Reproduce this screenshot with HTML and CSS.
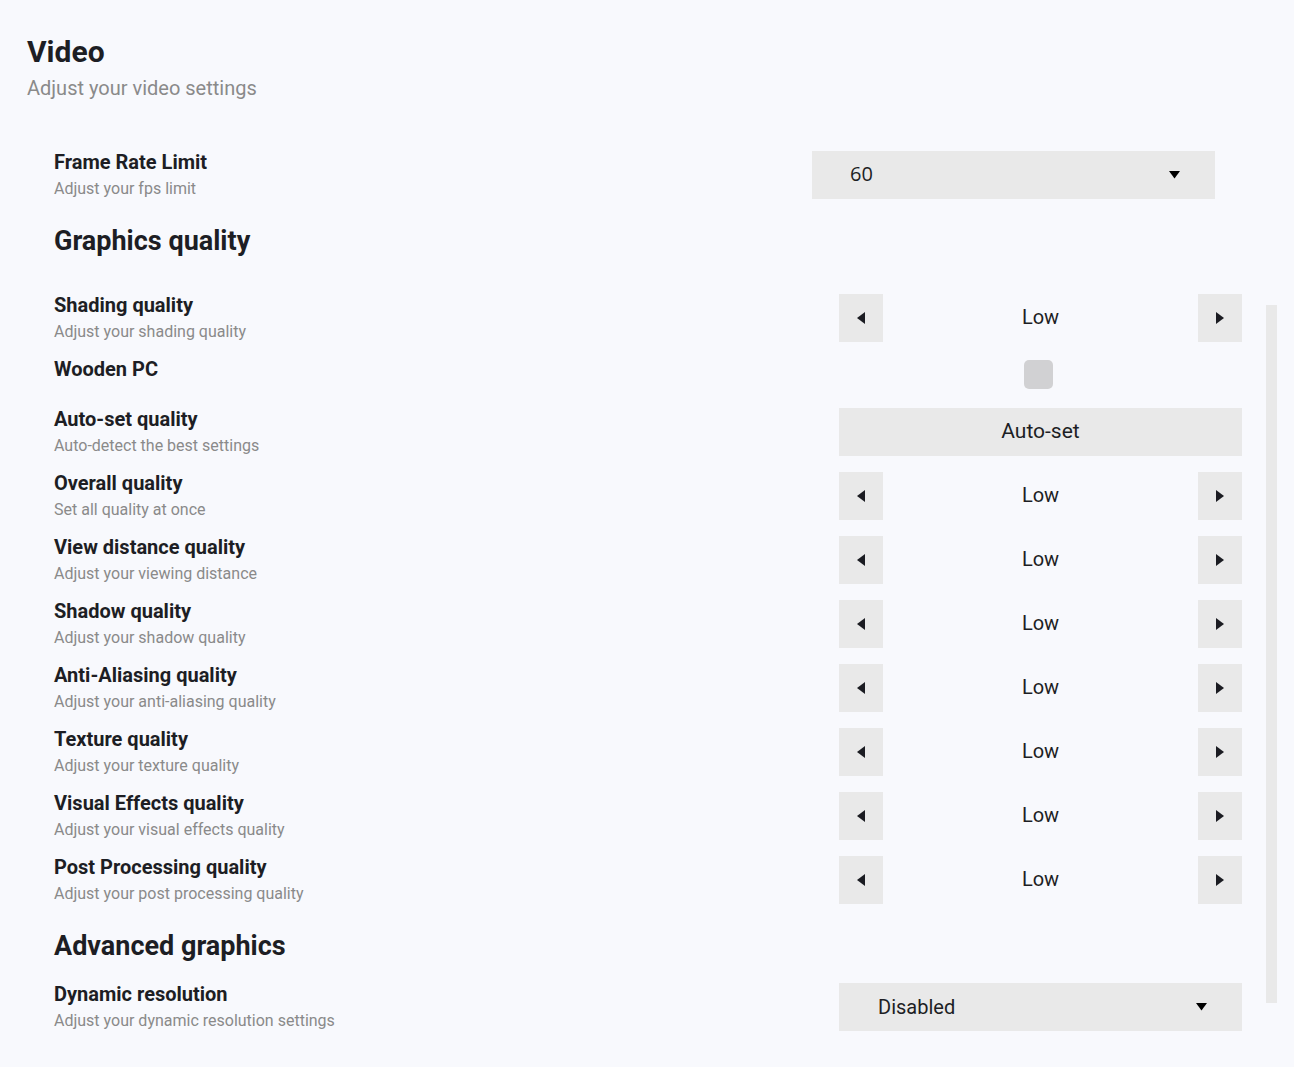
FILE: index.html
```html
<!DOCTYPE html>
<html lang="en">
<head>
    <meta charset="UTF-8">
    <meta name="viewport" content="width=device-width, initial-scale=1.0">
    <title>Video Settings</title>
    <link rel="stylesheet" href="styles.css">
</head>
<body>

    <div class="page">
        <h1 class="page-title">Video</h1>
        <p class="page-subtitle">Adjust your video settings</p>

        <div class="settings">
            <div class="row">
                <div class="label">
                    <div class="label-title">Frame Rate Limit</div>
                    <div class="label-sub">Adjust your fps limit</div>
                </div>
                <div class="select select-fps">
                    <span class="select-value select-value-alt">60</span>
                    <svg class="caret" width="11" height="8" viewBox="0 0 11 8"><polygon points="0,0 11,0 5.5,7.5" fill="#000"/></svg>
                </div>
            </div>

            <h2 class="section-title section-first">Graphics quality</h2>

            <div class="row">
                <div class="label">
                    <div class="label-title">Shading quality</div>
                    <div class="label-sub">Adjust your shading quality</div>
                </div>
                <div class="stepper">
                    <button class="step-btn"><svg width="8" height="12" viewBox="0 0 8 12"><polygon points="8,0 8,12 0,6" fill="#1b1c22"/></svg></button>
                    <span class="step-value">Low</span>
                    <button class="step-btn"><svg width="8" height="12" viewBox="0 0 8 12"><polygon points="0,0 0,12 8,6" fill="#1b1c22"/></svg></button>
                </div>
            </div>

            <div class="row">
                <div class="label">
                    <div class="label-title">Wooden PC</div>
                </div>
                <div class="check-wrap">
                    <span class="checkbox"></span>
                </div>
            </div>

            <div class="row">
                <div class="label">
                    <div class="label-title">Auto-set quality</div>
                    <div class="label-sub">Auto-detect the best settings</div>
                </div>
                <button class="action-btn">Auto-set</button>
            </div>

            <div class="row">
                <div class="label">
                    <div class="label-title">Overall quality</div>
                    <div class="label-sub">Set all quality at once</div>
                </div>
                <div class="stepper">
                    <button class="step-btn"><svg width="8" height="12" viewBox="0 0 8 12"><polygon points="8,0 8,12 0,6" fill="#1b1c22"/></svg></button>
                    <span class="step-value">Low</span>
                    <button class="step-btn"><svg width="8" height="12" viewBox="0 0 8 12"><polygon points="0,0 0,12 8,6" fill="#1b1c22"/></svg></button>
                </div>
            </div>

            <div class="row">
                <div class="label">
                    <div class="label-title">View distance quality</div>
                    <div class="label-sub">Adjust your viewing distance</div>
                </div>
                <div class="stepper">
                    <button class="step-btn"><svg width="8" height="12" viewBox="0 0 8 12"><polygon points="8,0 8,12 0,6" fill="#1b1c22"/></svg></button>
                    <span class="step-value">Low</span>
                    <button class="step-btn"><svg width="8" height="12" viewBox="0 0 8 12"><polygon points="0,0 0,12 8,6" fill="#1b1c22"/></svg></button>
                </div>
            </div>

            <div class="row">
                <div class="label">
                    <div class="label-title">Shadow quality</div>
                    <div class="label-sub">Adjust your shadow quality</div>
                </div>
                <div class="stepper">
                    <button class="step-btn"><svg width="8" height="12" viewBox="0 0 8 12"><polygon points="8,0 8,12 0,6" fill="#1b1c22"/></svg></button>
                    <span class="step-value">Low</span>
                    <button class="step-btn"><svg width="8" height="12" viewBox="0 0 8 12"><polygon points="0,0 0,12 8,6" fill="#1b1c22"/></svg></button>
                </div>
            </div>

            <div class="row">
                <div class="label">
                    <div class="label-title">Anti-Aliasing quality</div>
                    <div class="label-sub">Adjust your anti-aliasing quality</div>
                </div>
                <div class="stepper">
                    <button class="step-btn"><svg width="8" height="12" viewBox="0 0 8 12"><polygon points="8,0 8,12 0,6" fill="#1b1c22"/></svg></button>
                    <span class="step-value">Low</span>
                    <button class="step-btn"><svg width="8" height="12" viewBox="0 0 8 12"><polygon points="0,0 0,12 8,6" fill="#1b1c22"/></svg></button>
                </div>
            </div>

            <div class="row">
                <div class="label">
                    <div class="label-title">Texture quality</div>
                    <div class="label-sub">Adjust your texture quality</div>
                </div>
                <div class="stepper">
                    <button class="step-btn"><svg width="8" height="12" viewBox="0 0 8 12"><polygon points="8,0 8,12 0,6" fill="#1b1c22"/></svg></button>
                    <span class="step-value">Low</span>
                    <button class="step-btn"><svg width="8" height="12" viewBox="0 0 8 12"><polygon points="0,0 0,12 8,6" fill="#1b1c22"/></svg></button>
                </div>
            </div>

            <div class="row">
                <div class="label">
                    <div class="label-title">Visual Effects quality</div>
                    <div class="label-sub">Adjust your visual effects quality</div>
                </div>
                <div class="stepper">
                    <button class="step-btn"><svg width="8" height="12" viewBox="0 0 8 12"><polygon points="8,0 8,12 0,6" fill="#1b1c22"/></svg></button>
                    <span class="step-value">Low</span>
                    <button class="step-btn"><svg width="8" height="12" viewBox="0 0 8 12"><polygon points="0,0 0,12 8,6" fill="#1b1c22"/></svg></button>
                </div>
            </div>

            <div class="row">
                <div class="label">
                    <div class="label-title">Post Processing quality</div>
                    <div class="label-sub">Adjust your post processing quality</div>
                </div>
                <div class="stepper">
                    <button class="step-btn"><svg width="8" height="12" viewBox="0 0 8 12"><polygon points="8,0 8,12 0,6" fill="#1b1c22"/></svg></button>
                    <span class="step-value">Low</span>
                    <button class="step-btn"><svg width="8" height="12" viewBox="0 0 8 12"><polygon points="0,0 0,12 8,6" fill="#1b1c22"/></svg></button>
                </div>
            </div>

            <h2 class="section-title section-second">Advanced graphics</h2>

            <div class="row">
                <div class="label">
                    <div class="label-title">Dynamic resolution</div>
                    <div class="label-sub">Adjust your dynamic resolution settings</div>
                </div>
                <div class="select">
                    <span class="select-value">Disabled</span>
                    <svg class="caret" width="11" height="8" viewBox="0 0 11 8"><polygon points="0,0 11,0 5.5,7.5" fill="#000"/></svg>
                </div>
            </div>

            <!-- overlay scrollbar -->
            <div class="scrollbar"></div>
        </div>
    </div>

</body>
</html>
```

FILE: styles.css
```css
body {
    margin: 0;
    background-color: #f8f9fd;
    font-family: Roboto, "Liberation Sans", sans-serif;
    color: #1d1e24;
}

.page {
    padding: 34px 27px 0 27px;
}

.page-title {
    margin: 0;
    font-size: 30px;
    line-height: 36px;
    font-weight: 700;
}

.page-subtitle {
    margin: 6px 0 0 0;
    font-size: 20px;
    line-height: 24px;
    color: #8a8a8a;
}

.settings {
    position: relative;
    display: flex;
    flex-direction: column;
    gap: 16px;
    margin-top: 51px;
    padding: 0 25px 36px 27px;
}

.row {
    display: flex;
    justify-content: space-between;
    align-items: flex-start;
}

.label {
    margin-top: -1px;
}

.label-title {
    font-size: 20px;
    line-height: 24px;
    font-weight: 700;
}

.label-sub {
    margin-top: 5px;
    font-size: 16px;
    line-height: 20px;
    color: #8a8a8a;
}

.section-title {
    margin: 9px 0 0 0;
    font-size: 27px;
    line-height: 34px;
    font-weight: 700;
}

.section-first {
    margin-bottom: 20px;
}

.section-second {
    margin-bottom: 4px;
}

.select {
    width: 403px;
    height: 48px;
    box-sizing: border-box;
    padding: 0 35px 0 39px;
    background-color: #e9e9e9;
    display: flex;
    justify-content: space-between;
    align-items: center;
}

.select-fps {
    margin-right: 27px;
    padding-left: 38px;
}

.select-value {
    font-size: 20px;
}

.select-value-alt {
    font-family: "Open Sans", sans-serif;
    margin-bottom: 3px;
}

.caret {
    display: block;
}

.stepper {
    width: 403px;
    height: 48px;
    display: flex;
    align-items: center;
}

.step-btn {
    width: 44px;
    height: 48px;
    border: none;
    padding: 0;
    background-color: #e9e9e9;
    display: flex;
    justify-content: center;
    align-items: center;
}

.step-value {
    flex: 1;
    text-align: center;
    font-size: 20px;
    margin-bottom: 2px;
}

.check-wrap {
    width: 403px;
    height: 34px;
    box-sizing: border-box;
    padding-right: 4px;
    display: flex;
    justify-content: center;
    align-items: flex-start;
}

.checkbox {
    width: 29px;
    height: 29px;
    margin-top: 2px;
    border-radius: 5px;
    background-color: #d1d1d3;
}

.action-btn {
    width: 403px;
    height: 48px;
    border: none;
    padding: 0 0 2px 0;
    background-color: #e9e9e9;
    font-family: Roboto, "Liberation Sans", sans-serif;
    font-size: 21px;
    color: #1d1e24;
}

.scrollbar {
    position: absolute;
    left: 1239px;
    top: 154px;
    width: 11px;
    height: 698px;
    background-color: #e9e9e9;
}
```
